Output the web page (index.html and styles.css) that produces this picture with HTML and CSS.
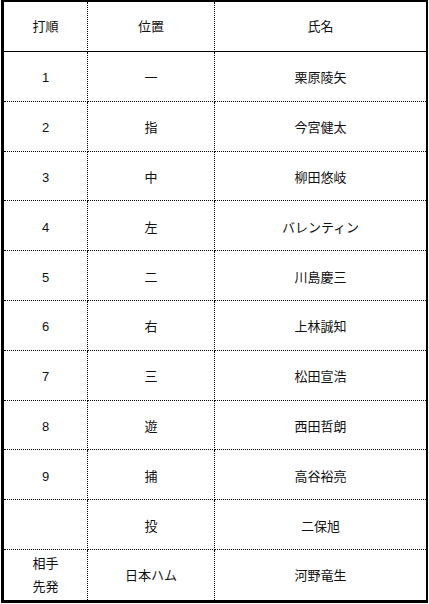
FILE: index.html
```html
<!DOCTYPE html>
<html lang="ja">
<head>
<meta charset="utf-8">
<link rel="stylesheet" href="styles.css">
</head>
<body>
<table class="lineup">
  <colgroup>
    <col class="c-order">
    <col class="c-pos">
    <col class="c-name">
  </colgroup>
  <thead>
    <tr><th>打順</th><th>位置</th><th>氏名</th></tr>
  </thead>
  <tbody>
    <tr><td>1</td><td>一</td><td>栗原陵矢</td></tr>
    <tr><td>2</td><td>指</td><td>今宮健太</td></tr>
    <tr><td>3</td><td>中</td><td>柳田悠岐</td></tr>
    <tr><td>4</td><td>左</td><td>バレンティン</td></tr>
    <tr><td>5</td><td>二</td><td>川島慶三</td></tr>
    <tr><td>6</td><td>右</td><td>上林誠知</td></tr>
    <tr><td>7</td><td>三</td><td>松田宣浩</td></tr>
    <tr><td>8</td><td>遊</td><td>西田哲朗</td></tr>
    <tr><td>9</td><td>捕</td><td>高谷裕亮</td></tr>
    <tr><td></td><td>投</td><td>二保旭</td></tr>
    <tr class="last"><td>相手<br>先発</td><td>日本ハム</td><td>河野竜生</td></tr>
  </tbody>
</table>
</body>
</html>
```

FILE: styles.css
```css
html, body {
  margin: 0;
  padding: 0;
  background: #fff;
}

body {
  font-family: "Liberation Sans", "Noto Sans CJK JP", sans-serif;
  font-size: 13px;
  color: #111;
}

.lineup {
  margin-left: 1px;
  width: 427px;
  table-layout: fixed;
  border-collapse: separate;
  border-spacing: 0;
  border-style: solid;
  border-color: #000;
  border-width: 2px 2px 3px 3px;
}

.c-order { width: 84px; }
.c-pos { width: 127px; }
.c-name { width: 211px; }

.lineup th,
.lineup td {
  padding: 0;
  text-align: center;
  vertical-align: middle;
  font-weight: normal;
  line-height: 23px;
  border-right: 1px dotted #000;
  border-bottom: 1px dotted #000;
}

.lineup td {
  padding-top: 3px;
}

.lineup th:last-child,
.lineup td:last-child {
  border-right: none;
}

.lineup thead tr {
  height: 50px;
}

.lineup th {
  border-bottom: 1px solid #000;
}

.lineup tbody tr {
  height: 49.8px;
}

.lineup tr.last td {
  border-bottom: none;
  padding-top: 1px;
}
```
